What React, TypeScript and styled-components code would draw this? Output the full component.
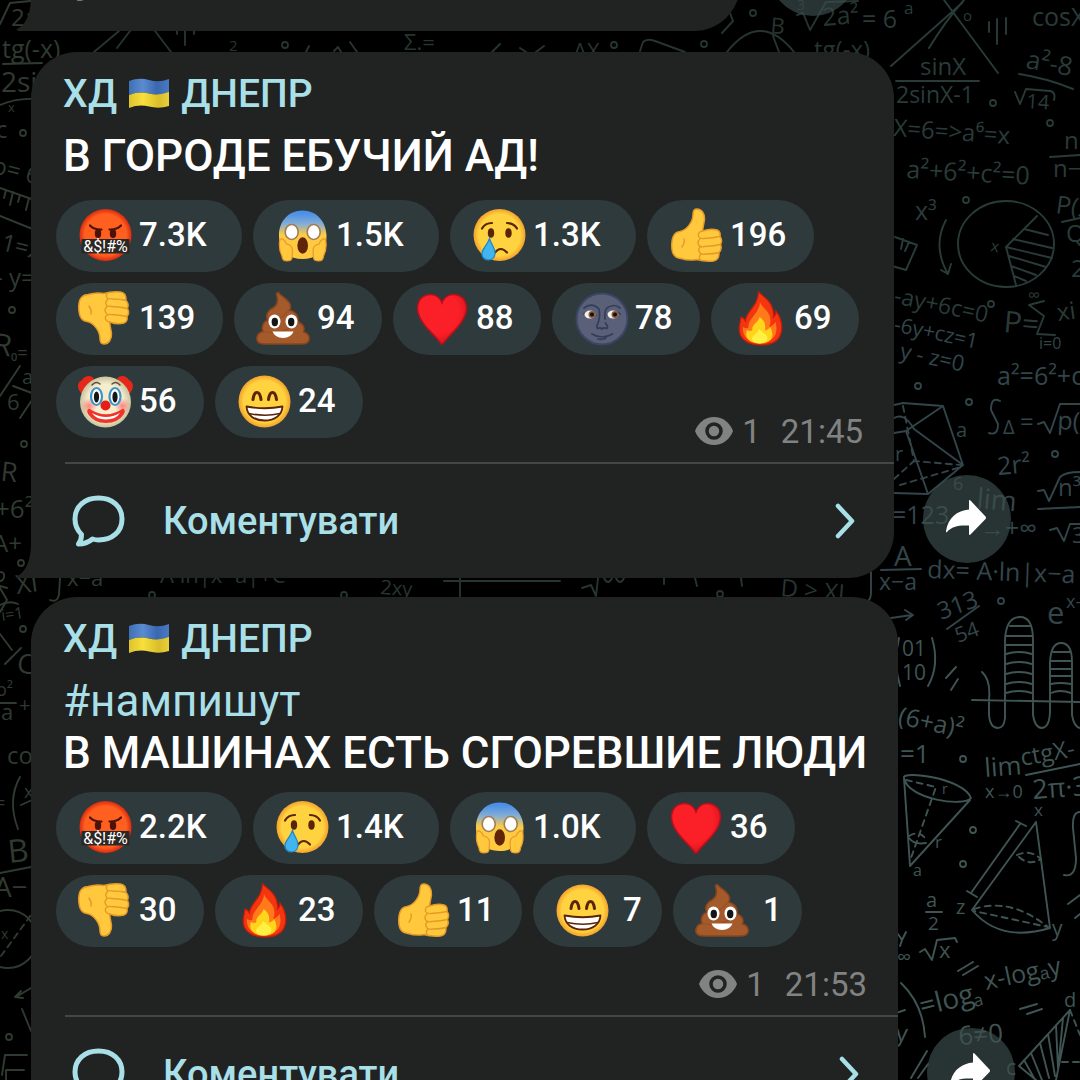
import React from "react";
import styled, { createGlobalStyle } from "styled-components";

const GlobalStyle = createGlobalStyle`
  * { box-sizing: border-box; }
  body { margin: 0; background: #000; font-family: Roboto, "Noto Sans", sans-serif; }
`;

const accent = "#a9dfe7";

const Page = styled.main`
  position: relative;
  height: 100vh;
  overflow: hidden;
  background: #000;
`;

const WallpaperSvg = styled.svg`
  position: absolute;
  top: 0;
  left: 0;
  width: 1080px;
  height: 1080px;
  font-family: "Open Sans", sans-serif;
  font-weight: 400;
`;

const Feed = styled.div`
  position: relative;
  display: flex;
  flex-direction: column;
  margin-top: -83px;
`;

const Row = styled.article<{ $gap: number }>`
  display: flex;
  align-items: flex-end;
  gap: 29px;
  padding-left: 31px;
  margin-bottom: ${(p) => p.$gap}px;
`;

const Bubble = styled.div<{ $width: number }>`
  position: relative;
  flex: 0 1 ${(p) => p.$width}px;
  min-width: 0;
  background: #212322;
  border-radius: 46px 46px 46px 0;
`;

const Tail = styled.svg`
  position: absolute;
  left: -15px;
  bottom: 0;
  width: 16px;
  height: 34px;
  fill: #212322;
`;

const Header = styled.h2`
  display: flex;
  align-items: center;
  gap: 11px;
  margin: 0;
  padding: 19px 31px 0 32px;
  font-size: 39px;
  line-height: 46px;
  font-weight: 500;
  color: ${accent};
`;

const FlagSvg = styled.svg`
  width: 42px;
  height: 32px;
`;

const Body = styled.div<{ $below: number }>`
  padding: 13px 0 ${(p) => p.$below}px 32px;
  font-size: 44px;
  line-height: 52px;
  font-weight: 500;
  color: #fff;
`;

const Paragraph = styled.p`
  margin: 0;
`;

const Hashtag = styled.a`
  color: ${accent};
  font-weight: 400;
  text-decoration: none;
`;

const Reactions = styled.div`
  display: flex;
  flex-wrap: wrap;
  gap: 11px;
  padding: 0 31px 24px 25px;
`;

const Pill = styled.button`
  display: flex;
  align-items: center;
  gap: 7px;
  height: 72px;
  padding: 0 28px 2px 22px;
  border: 0;
  border-radius: 36px;
  background: #2f3a3d;
  color: #fff;
  font: 500 33px/40px Roboto, "Noto Sans", sans-serif;
`;

const PillIcon = styled.svg`
  flex: none;
  width: 54px;
  height: 54px;
  overflow: visible;
`;

/* each extra character widens the pill by one fixed step */
const countWidths = [0, 18, 37, 56, 75];

const Count = styled.span<{ $chars: number }>`
  flex: none;
  width: ${(p) => countWidths[p.$chars]}px;
  text-indent: ${(p) => (p.$chars === 1 ? 7 : 0)}px;
  text-align: left;
  white-space: nowrap;
`;

const Meta = styled.div`
  display: flex;
  align-items: flex-end;
  align-self: flex-end;
  height: 43px;
  margin: 0 0 -10px auto;
  font-size: 33px;
  line-height: 33px;
  color: #818383;
`;

const EyeSvg = styled.svg`
  width: 38px;
  height: 28px;
  margin: 0 9px 3px 0;
`;

const Time = styled.time`
  margin-left: 20px;
`;

const Comment = styled.button<{ $height: number }>`
  display: flex;
  align-items: center;
  width: calc(100% - 34px);
  height: ${(p) => p.$height}px;
  margin-left: 34px;
  padding: 0 39px 0 7px;
  border: 0;
  border-top: 2px solid #454746;
  background: none;
  color: ${accent};
  font: 500 38px/46px Roboto, "Noto Sans", sans-serif;
  text-align: left;
`;

const BubbleSvg = styled.svg`
  width: 54px;
  height: 54px;
`;

const CommentText = styled.span`
  flex: 1;
  padding-left: 37px;
`;

const ChevronSvg = styled.svg`
  width: 20px;
  height: 36px;
`;

const Forward = styled.button`
  flex: none;
  display: grid;
  place-items: center;
  width: 88px;
  height: 88px;
  margin-bottom: 15px;
  padding: 0;
  border: 0;
  border-radius: 50%;
  background: rgba(62, 78, 78, 0.65);
`;

const ForwardSvg = styled.svg`
  width: 42px;
  height: 38px;
  fill: #fff;
`;

/* ---------- wallpaper ---------- */

type TProps = { x: number; y: number; s?: number; r?: number; children: React.ReactNode };
const T = ({ x, y, s = 24, r = 0, children }: TProps) => (
  <text x={x} y={y} fontSize={s} transform={r ? `rotate(${r} ${x} ${y})` : undefined}>
    {children}
  </text>
);
const L = ({ d, dash }: { d: string; dash?: boolean }) => (
  <path d={d} fill="none" stroke="currentColor" strokeWidth="1.9" strokeLinecap="round" strokeLinejoin="round" strokeDasharray={dash ? "6 5" : undefined} />
);
const Dots = ({ at }: { at: [number, number][] }) => (
  <>
    {at.map(([x, y]) => (
      <circle key={`${x}-${y}`} cx={x} cy={y} r="3" fill="none" stroke="currentColor" strokeWidth="1.8" />
    ))}
  </>
);

const Wallpaper = () => (
  <WallpaperSvg viewBox="0 0 1080 1080" fill="currentColor" aria-hidden="true">
    <defs>
      <radialGradient id="yellow"><stop offset="0.8" stopColor="#ffd23f" /><stop offset="1" stopColor="#f3a12c" /></radialGradient>
      <radialGradient id="rage"><stop offset="0.8" stopColor="#ff5f1f" /><stop offset="1" stopColor="#d92a10" /></radialGradient>
      <linearGradient id="scream" x1="0" y1="0" x2="0" y2="1"><stop offset="0.05" stopColor="#4a8fe8" /><stop offset="0.28" stopColor="#85aed4" /><stop offset="0.5" stopColor="#fccb45" /><stop offset="1" stopColor="#ffc93c" /></linearGradient>
      <radialGradient id="heart" cx="0.4" cy="0.35" r="0.75"><stop offset="0.6" stopColor="#fb1f27" /><stop offset="1" stopColor="#c9101b" /></radialGradient>
      <radialGradient id="clown"><stop offset="0.7" stopColor="#f6edcf" /><stop offset="1" stopColor="#c9c39d" /></radialGradient>
      <radialGradient id="cheek"><stop offset="0" stopColor="#ff6b6b" stopOpacity="0.8" /><stop offset="1" stopColor="#ff6b6b" stopOpacity="0" /></radialGradient>
      <linearGradient id="flagBlue" x1="0" y1="0" x2="1" y2="0"><stop offset="0" stopColor="#3f6fb5" /><stop offset="0.35" stopColor="#5b8bd0" /><stop offset="0.7" stopColor="#3a68b0" /><stop offset="1" stopColor="#4a78c2" /></linearGradient>
      <linearGradient id="flagYellow" x1="0" y1="0" x2="1" y2="0"><stop offset="0" stopColor="#dcc22c" /><stop offset="0.35" stopColor="#f8e03c" /><stop offset="0.75" stopColor="#d9bd2a" /><stop offset="1" stopColor="#e8d03a" /></linearGradient>
    </defs>

    <g color="#2f3a30">
      <L d="M0 24 L10 3 L40 0" />
      <T x={11} y={26}>2a</T>
      <T x={2} y={58} s={25}>tg(-x)</T>
      <L d="M3 64 L42 63" />
      <T x={1} y={92} s={28}>2si</T>
      <L d="M0 105 Q16 98 34 99" />
      <T x={8} y={112} s={13}>x</T>
      <T x={-4} y={138}>c</T>
      <T x={-9} y={173} r={14}>o= 6</T>
      <L d="M0 188 L40 202 M6 190 L4 198 M13 192 L10 205 M20 195 L18 202 M29 198 L26 210 M0 216 L40 232" />
      <T x={0} y={250} r={14}>1=x</T>
      <T x={-5} y={286}>- y=</T>
      <T x={-8} y={354} s={30} r={8}>R</T>
      <T x={11} y={359} s={18}>₀=</T>
      <L d="M0 396 L20 366 M13 386 L40 396 M20 418 L40 388" />
      <T x={22} y={384} s={20}>a</T>
      <T x={7} y={410} s={22}>6</T>
      <T x={-6} y={480} s={27} r={6}>'R</T>
      <T x={-5} y={518} s={26}>+6²</T>
      <T x={-7} y={552} s={24}>A+</T>
      <L d="M0 572 Q5 572 4 577 Q3 581 0 581 M0 586 L7 588 M0 588 L7 600 L0 612" />
      <T x={17} y={594} s={26} r={-8}>XI</T>
      <L d="M60 578 L59 595 Q57 603 50 600 M0 605 Q10 600 18 604" />
      <T x={67} y={586} s={22}>x−a</T>
      <T x={2} y={621} s={16} r={-8}>i=1</T>
      <L d="M0 634 L12 650 M5 664 L21 648" />
      <T x={16} y={672} s={27} r={8}>C</T>
      <T x={-4} y={696} s={18}>o²</T>
      <L d="M0 703 H16" />
      <T x={1} y={720} s={22}>a</T>
      <T x={19} y={712} s={20}>+</T>
      <T x={7} y={764}>co</T>
      <T x={-6} y={810} s={20}>=</T>
      <L d="M20 777 Q7 800 18 829 M21 805 L32 800" />
      <T x={24} y={798} s={18}>x</T>
      <T x={9} y={863} s={32} r={-6}>B</T>
      <L d="M0 873 L31 867" />
      <T x={-6} y={897} s={28}>A−</T>
      <circle cx="8" cy="939" r="29" fill="none" stroke="currentColor" strokeWidth="1.9" />
      <T x={1} y={939} s={14}>x</T>
      <L d="M1 956 L31 915" dash />
      <L d="M31 988 L16 997 M21 991 L15 997 L23 998 M22 1009 L31 1031 M2 1075 L5 1055 H27 M6 1080 V1070 H24" />
      <Dots at={[[23, 133], [12, 310], [24, 444], [21, 563], [23, 629], [9, 1037]]} />
    </g>

    <g color="#263531">
      <L d="M94 52 L119 31 M117 48 L130 31 M155 31 L171 52 M185 31 V45 M177 31 V34 M194 31 V34" />
      <T x={229} y={51} s={15}>2</T>
      <L d="M309 46 L306 52 M334 51 L338 47 L341 52 M350 42 L357 52" />
      <T x={404} y={50} s={22}>Σ.=</T>
      <L d="M492 52 L500 44 M520 48 L526 52 M536 52 L544 46" />
      <T x={573} y={59} s={22}>AX</T>
      <L d="M640 51 L643 42 Q647 38 655 41 L685 52 M727 52 Q760 10 794 52 M773 36 L779 52 M722 33 L733 21 L730 13" />
      <T x={770} y={33} s={22} r={5}>B</T>
      <T x={814} y={58} s={24}>tg(-x)</T>
      <L d="M797 15 L803 13 L810 30 L826 2 L858 1" />
      <T x={797} y={10} s={14}>3</T>
      <T x={823} y={26} s={25} r={-5}>2a²</T>
      <Dots at={[[285, 45], [614, 45], [704, 44], [753, 13]]} />
      <T x={160} y={583} s={22}>A·ln|x−a|+C</T>
      <T x={380} y={594} s={20} r={4}>2xy</T>
      <L d="M444 581 H560 M460 578 V597 M582 588 L591 585 L596 596 L598 578 M604 578 Q608 586 612 578 M616 578 Q620 586 624 578" />
      <L d="M664 578 V584 M695 578 L697 586 M741 578 L742 586" />
      <T x={780} y={596} r={5}>D &gt; XI</T>
      <Dots at={[[152, 595], [344, 595], [720, 594]]} />
    </g>

    <g color="#293b39">
      <T x={862} y={28} s={25}>= 6</T>
      <T x={904} y={14} s={17}>a</T>
      <L d="M891 66 L962 3 M944 0 L998 73 M964 0 Q946 20 929 48 M989 22 V32 M997 19 V44 M1006 18 V34" />
      <T x={963} y={21} s={15}>o</T>
      <T x={1032} y={26} s={25}>cosX</T>
      <T x={920} y={75} s={24}>sinX</T>
      <L d="M896 81 H979" />
      <T x={896} y={103} s={23}>2sinX-1</T>
      <T x={1025} y={68} s={26} r={10}>a²-8</T>
      <L d="M1019 74 Q1046 78 1073 89 M1015 92 L1020 104 L1026 89 L1050 91 Q1056 92 1054 100" />
      <T x={1026} y={108} s={20} r={4}>14</T>
      <T x={893} y={136} s={24} r={4}>X=6=&gt;a⁶=x</T>
      <T x={906} y={178} s={25} r={3}>a²+6²+c²=0</T>
      <T x={1064} y={149}>n</T>
      <L d="M1050 157 L1080 155" />
      <T x={1053} y={177}>n−</T>
      <T x={915} y={220} s={25}>x³</T>
      <ellipse cx="1006" cy="244" rx="48" ry="43" fill="none" stroke="currentColor" strokeWidth="1.9" />
      <L d="M1006 247 L1037 216 M1006 247 L1016 285 M1024 229 L1048 235 M1013 239 L1052 248 M1006 247 L1052 258 M1009 256 L1046 267 M1011 266 L1036 275 M1014 276 L1026 281" />
      <T x={990} y={251} s={16} r={10}>x</T>
      <L d="M946 220 Q932 246 948 274 M941 270 L948 274 L951 264 M895 237 L917 245 L906 270 L892 266 M903 239 L901 249 M909 242 L905 251" />
      <T x={1055} y={213} s={25} r={8}>P(x)</T>
      <L d="M1062 222 L1080 218" />
      <T x={1066} y={242}>Q</T>
      <T x={1071} y={277}>2</T>
      <T x={893} y={303} s={23} r={12}>-ay+6c=0</T>
      <T x={1003} y={332} s={30} r={5}>P=</T>
      <L d="M1044 301 L1029 305 L1044 316 L1037 334 L1055 335" />
      <T x={1028} y={301} s={17}>∞</T>
      <T x={1058} y={321} r={-8}>xi</T>
      <Dots at={[[993, 103], [1050, 123], [966, 200], [991, 304]]} />
    </g>

    <g color="#32454a">
      <T x={893} y={331} s={21} r={12}>-6y+cz=1</T>
      <T x={899} y={358} s={22} r={12}>y - z=0</T>
      <T x={1039} y={349} s={16}>i=0</T>
      <T x={997} y={385} s={25}>a²=6²+c</T>
      <L d="M894 405 L903 403 L943 406 L963 465 L928 494 L894 493 M906 431 L943 406 M894 433 L906 431 L928 494 M894 418 Q904 412 914 429 L963 465" />
      <L d="M903 406 L914 461 L961 465 M894 479 L914 461 M900 485 L961 467" dash />
      <T x={956} y={437} s={20}>a</T>
      <T x={895} y={461} s={20}>r</T>
      <L d="M1000 401 Q991 396 991 410 L998 424 Q998 436 989 433 M1038 424 L1044 422 L1050 433 L1060 404 H1080" />
      <T x={1003} y={434} s={20}>Δ</T>
      <T x={1020} y={430} s={24}>=</T>
      <T x={1057} y={429} s={25} r={3}>p(</T>
      <T x={998} y={475} s={25} r={-5}>2r²</T>
      <L d="M1038 491 L1044 490 L1049 501 L1060 477 Q1065 472 1080 472 M1038 509 L1080 507 M1050 530 L1057 528 L1064 541 L1070 524 H1080" />
      <T x={1058} y={496} s={24}>n³</T>
      <T x={1072} y={543} s={22}>3</T>
      <T x={892} y={524} s={25}>=123</T>
      <T x={953} y={490} s={18}>6</T>
      <T x={976} y={508} s={28} r={5}>lim</T>
      <T x={980} y={537} s={25}>→+∞</T>
      <T x={894} y={566} s={28}>A</T>
      <L d="M881 570 L921 569" />
      <T x={879} y={590} s={23}>x−a</T>
      <T x={927} y={578} s={25} r={2}>dx= A·ln|x−a|+</T>
      <T x={941} y={620} s={24} r={-20}>313</T>
      <L d="M947 629 L979 606" />
      <T x={958} y={643} s={21} r={-20}>54</T>
      <L d="M891 618 L912 615 M905 610 L913 615 L906 620 M871 572 V592 Q871 599 868 601" />
      <T x={1047} y={624} s={31}>e</T>
      <T x={1066} y={608} s={18}>x-</T>
      <Dots at={[[918, 386], [969, 402], [1055, 454], [1001, 601]]} />
    </g>

    <g color="#3f5554">
      <T x={902} y={656} s={21}>01</T>
      <T x={902} y={680} s={21}>10</T>
      <L d="M932 638 Q940 665 928 686 M899 638 Q893 662 900 686 M946 678 L956 667 M951 690 L958 679" />
      <L d="M972 700 L1080 702 M982 672 Q991 680 989 700 V715 Q990 728 998 728 Q1004 728 1005 718 V640 Q1006 617 1020 617 Q1033 617 1033 640 V715 Q1035 728 1042 728 Q1050 727 1050 710 V662 Q1051 643 1061 643 Q1072 643 1072 662 V715 Q1074 727 1080 728" />
      <L d="M1010 626 H1030 M1006 636 H1032 M1006 645 H1032 M1006 654 Q1020 650 1032 654 M1006 664 Q1020 660 1032 664 M1006 674 Q1020 670 1032 674 M1006 684 Q1020 680 1032 684 M1006 693 Q1020 689 1032 693 M1053 652 H1070 M1051 661 H1071 M1051 669 H1071 M1051 676 H1071 M1051 684 Q1060 682 1071 684 M1051 693 Q1060 689 1071 693" />
      <T x={897} y={724} s={25} r={12}>(6+a)²</T>
      <T x={900} y={763} s={26}>=1</T>
      <T x={985} y={777} s={26} r={-4}>lim</T>
      <T x={985} y={798} s={18}>x→0</T>
      <T x={1022} y={766} s={24} r={-10}>ctgX-</T>
      <L d="M1026 775 L1080 764" />
      <T x={1033} y={799} s={27} r={-4}>2π·3</T>
      <L d="M904 778 C901 770 964 778 971 798 C965 807 908 800 904 778 L910 866 L970 800 M909 838 Q914 845 926 843" />
      <L d="M906 780 L936 787 L911 858 M909 836 Q920 829 927 841" dash />
      <T x={942} y={794} s={14}>r</T>
      <T x={935} y={848} s={17}>r</T>
      <T x={913} y={876} s={16}>a</T>
      <L d="M1036 822 L972 910 Q1000 943 1050 928 L1036 822 M1020 824 L971 893 M1016 821 L1026 826 M967 891 L977 897" />
      <L d="M974 909 Q1010 897 1048 927 L974 911 M1017 855 Q1030 849 1041 859 Q1028 867 1017 855" dash />
      <T x={1034} y={816} s={17}>x</T>
      <T x={956} y={914} s={20}>z</T>
      <T x={1052} y={936} s={21}>y</T>
      <L d="M1080 812 Q1072 812 1073 828 L1076 858 Q1076 878 1064 875 M1068 904 L1080 895 M1075 918 L1080 914" />
      <T x={926} y={907} s={20}>a</T>
      <L d="M926 912 H942" />
      <T x={928} y={930} s={19}>2</T>
      <L d="M898 934 L902 940 L906 932 M902 940 L900 946" />
      <T x={897} y={964} s={20}>∞</T>
      <L d="M920 952 L925 949 L932 960 L937 940 L955 938 L957 942" />
      <T x={939} y={958} s={22}>x</T>
      <L d="M958 971 L973 962 M963 975 L978 966 M1020 1009 L1037 1004 M1027 1014 L1042 1009 M901 983 Q923 1004 925 1037 M896 1013 L905 1010" />
      <T x={922} y={1016} s={28} r={-14}>=log</T>
      <T x={975} y={1007} s={17} r={-14}>a</T>
      <T x={986} y={990} s={25} r={-12}>x-logₐy</T>
      <T x={895} y={1041} s={24} r={5}>y</T>
      <T x={959} y={1045} s={26} r={-4}>6≠0</T>
      <T x={1064} y={1007} s={20}>d</T>
      <T x={1006} y={1075} s={21}>c</T>
      <L d="M1019 1066 L1070 1010 L1056 1080 M1019 1066 L1036 1080 M1063 1018 L1059 1060 M1056 1025 L1058 1068 M1048 1034 L1055 1076 M1040 1043 L1049 1078 M1031 1053 L1042 1080 M1024 1060 L1034 1078 M911 1078 L927 1051 M918 1078 L928 1064" />
      <L d="M1070 1010 L1080 1035 M1062 1062 H1080" dash />
      <Dots at={[[963, 759], [973, 830], [963, 864]]} />
    </g>
  </WallpaperSvg>
);

/* ---------- emoji drawings, on a 54 unit grid ---------- */

const brown = "#5b2406";

const Hand = () => (
  <g stroke="#e59a28" strokeWidth="1.4" strokeLinecap="round">
    <path fill="#ffc83d" d="M28 1C33 1 36 6 35.500 12L33.500 23Q42 20 48 22Q52 23.500 51 28.500Q54 32 51.500 36.500Q53.500 41 50 44.500Q50.500 52 44.500 53Q36 54 28 51.500Q20 53 12 50.500C5 50 2.700 45 2.700 38C2.700 30 5 24 11 23.500C18 22 24 14 24 6Q24 1 28 1Z" />
    <path fill="none" d="M33.500 23Q28.500 24 29.500 28.500Q31 31 35 30.500Q44 30 51 28.500M31 31Q27.500 34 30 37.500Q32 39.500 36 38.500Q45 38 51.500 36.500M31 39Q28.500 42 31 45Q33 47 37 46Q45 46 50 44.500M31.500 46.500Q29 50 32 52.500M13 39Q16 35 15 31" />
  </g>
);

const emoji: Record<string, React.ReactNode> = {
  rage: (
    <>
      <circle cx="27.500" cy="27" r="26" fill="url(#rage)" />
      <path d="M12 17.500Q16.500 22 23.500 21.500M43 17.500Q38.500 22 31.500 21.500" fill="none" stroke="#4a1208" strokeWidth="2.200" strokeLinecap="round" />
      <ellipse cx="20" cy="25.500" rx="3.200" ry="4.500" fill="#4a1208" />
      <ellipse cx="35" cy="25.500" rx="3.200" ry="4.500" fill="#4a1208" />
      <rect x="3.500" y="31" width="48" height="14.500" rx="1" fill="#2b2724" />
      <text x="27.500" y="43.500" textAnchor="middle" fontSize="16" fontWeight="400" fill="#fff">&amp;$!#%</text>
    </>
  ),
  scream: (
    <>
      <path d="M27.500 2.500C42 2.500 51 14 51.500 27C52 42 42 51 27.500 51C13 51 3.500 42 4 27C4 14 13 2.500 27.500 2.500Z" fill="url(#scream)" />
      <g fill="#fff" stroke="#a47c50" strokeWidth="1.600">
        <ellipse cx="16.700" cy="24" rx="6.500" ry="7.500" />
        <ellipse cx="38.700" cy="24" rx="6.500" ry="7.500" />
      </g>
      <ellipse cx="27.700" cy="37.500" rx="5.300" ry="8.200" fill="#5f2409" />
      <g fill="#ffc83d" stroke="#e9992b" strokeWidth="1.200">
        <path d="M5 31Q9 30 11.500 36Q17 37 17.500 42L17 50Q16.500 53 12 53Q7 53 7 48Q3 40 5 31Z" />
        <path d="M50.500 31Q46.500 30 44 36Q38.500 37 38 42L38.500 50Q39 53 43.500 53Q48.500 53 48.500 48Q52.500 40 50.500 31Z" />
      </g>
    </>
  ),
  cry: (
    <>
      <circle cx="27.500" cy="27" r="26" fill="url(#yellow)" />
      <ellipse cx="19" cy="25" rx="3.200" ry="4.800" fill={brown} />
      <ellipse cx="36.500" cy="25" rx="3.200" ry="4.800" fill={brown} />
      <path d="M10 20.500Q13 15 20 15M45 20.500Q42 15 35 15M23 44.500Q28.500 37.500 35 44.500" fill="none" stroke={brown} strokeWidth="2.200" strokeLinecap="round" />
      <path d="M17.500 30.500C19 36 23 40 23 45C23 49.500 20 52 16.500 52C12.500 52 9.500 49 10 45C10.500 40 15.500 37 17.500 30.500Z" fill="#42b4f0" stroke="#1c86c7" strokeWidth="1.200" />
    </>
  ),
  up: <Hand />,
  down: <g transform="matrix(1 0 0 -1 -2 54)"><Hand /></g>,
  poop: (
    <>
      <path d="M22.500 1.500C25 6 35 9 34.500 16Q34.500 18 33.500 19C41 21 43 27 42 31C48 33 49 38 47.500 41C52 42 54 46 53 49Q52 53 45 53H9Q2 53 1 49C0 45 3 41 7 40.500C5 35 8 30 12 29.500C9 24 12 19 17 17C23 14 22 8 20.500 2.500Z" fill="#a55a2b" stroke="#8a451d" strokeWidth="1.500" strokeLinejoin="round" />
      <path d="M12 29.500Q24 31 33 19M7 40.500Q28 45 42 31" fill="none" stroke="#8a451d" strokeWidth="1.200" opacity=".5" />
      <ellipse cx="18.500" cy="30.500" rx="6" ry="7" fill="#fff" />
      <ellipse cx="35.500" cy="30.500" rx="6" ry="7" fill="#fff" />
      <ellipse cx="18.800" cy="31" rx="3.200" ry="4.200" fill="#151515" />
      <ellipse cx="35.200" cy="31" rx="3.200" ry="4.200" fill="#151515" />
      <path d="M16.500 40.500H37.500Q35 47 27 47Q19 47 16.500 40.500Z" fill="#fff" />
    </>
  ),
  heart: (
    <path d="M27 12C30.500 3 38.500 2.500 43.500 4.500C50.500 7 53 15 50.500 23C46.500 36 35.500 42 28.500 52Q27 54 25.500 52C18.500 42 7.500 36 3.500 23C1 15 3.500 7 10.500 4.500C15.500 2.500 23.500 3 27 12Z" fill="url(#heart)" stroke="#b90f1a" strokeWidth="1.500" />
  ),
  moon: (
    <>
      <circle cx="28" cy="28" r="25.500" fill="#596078" stroke="#3b4666" strokeWidth="2" />
      <g fill="none" stroke="#333d59" strokeWidth="1.700" strokeLinecap="round">
        <path d="M10 17Q18 11 25 18Q26.500 26 24 32Q22 36 23.500 37.500Q27 36 28 38Q30 36 33 37.500Q34.500 36 31.500 32M31 28Q30 20 33 17Q40 12 46 17M18 43Q28 49 38.500 43M24 48Q28 49 32 47" />
        <path d="M10 23Q16 18 22 24M33 24Q39 18 46 23" />
      </g>
      <ellipse cx="16" cy="23.500" rx="5.500" ry="4" fill="#f4f1ea" />
      <ellipse cx="39" cy="23.500" rx="5.500" ry="4" fill="#f4f1ea" />
      <circle cx="18" cy="23.500" r="3.500" fill="#8a5a35" /><circle cx="18" cy="23.500" r="2" fill="#111" />
      <circle cx="41" cy="23.500" r="3.500" fill="#8a5a35" /><circle cx="41" cy="23.500" r="2" fill="#111" />
    </>
  ),
  fire: (
    <>
      <path d="M25.500 1C31 6 38 10 40 19Q41 23 40.500 26Q43 24 43 20C48 26 50 35 48 42C46 50 38 54 27.500 54C16 54 8 49 6.500 41C5.500 34 8 30 8 26Q11 27 12.500 30C13 20 25 16 25.500 1Z" fill="#f4350f" stroke="#c51d08" strokeWidth="1.200" />
      <path d="M27 11C29 17 37 20 37.500 29Q37.500 33 36 36Q41 34 42.500 31C46 43 40 52 27.500 52C16 52 9 46 10 36Q13 38 15.500 37C14 28 27 22 27 11Z" fill="#ff7b1a" />
      <path d="M26.500 26C31 29 33 33 32 39Q35 40 37 36C43 46 37 52.500 27 52.500C17 52.500 11 47 14 39Q17 41 19.500 39C18 34 26 31 26.500 26Z" fill="#ffd51c" />
      <path d="M26 38C31 43 36 44 34 49Q32 52.500 27 52.500Q20 52.500 19 48C19 44 25 43 26 38Z" fill="#fff044" />
    </>
  ),
  clown: (
    <>
      <path d="M3 19C-2 13 0 8 4 6C7 1 14 1 16 5L9 18ZM52 19C57 13 55 8 51 6C48 1 41 1 39 5L46 18Z" fill="#e8271c" />
      <circle cx="27.500" cy="28" r="25.500" fill="url(#clown)" />
      <circle cx="11" cy="32" r="8" fill="url(#cheek)" /><circle cx="44.500" cy="32" r="8" fill="url(#cheek)" />
      <g fill="#fff" stroke="#3e94c8" strokeWidth="2.200">
        <ellipse cx="18.500" cy="22.500" rx="5.500" ry="8.500" /><ellipse cx="37" cy="22.500" rx="5.500" ry="8.500" />
      </g>
      <ellipse cx="18.500" cy="23" rx="2.600" ry="5.500" fill="#161616" /><ellipse cx="37" cy="23" rx="2.600" ry="5.500" fill="#161616" />
      <path d="M14 11Q18 6.500 22 10M34 10Q38 6.500 42 11" fill="none" stroke="#5b4a32" strokeWidth="1.500" strokeLinecap="round" />
      <path d="M11 34.500Q28 46 45 34.500Q48 36 46 40Q40 49 28 49Q16 49 10 40Q8 36 11 34.500Z" fill="#f0342a" />
      <path d="M14 39Q28 47 42 39Q38 45.500 28 45.500Q18 45.500 14 39Z" fill="#fff" />
      <circle cx="27.500" cy="31.500" r="5" fill="#e51f18" />
    </>
  ),
  grin: (
    <>
      <circle cx="27.500" cy="27.500" r="26" fill="url(#yellow)" />
      <path d="M16 25.500Q17 18.500 20 18.500Q23 18.500 24 25.500M31.500 25.500Q32.500 18.500 35.500 18.500Q38.500 18.500 39.500 25.500" fill="none" stroke={brown} strokeWidth="3" strokeLinecap="round" />
      <path d="M9.500 32.500Q28 36 45.500 32.500C45 41 38 46.500 27.500 46.500C17 46.500 10 41 9.500 32.500Z" fill="#fff" stroke={brown} strokeWidth="1.800" strokeLinejoin="round" />
      <path d="M12 39.500Q28 43 43 39.500" fill="none" stroke={brown} strokeWidth="1.600" />
    </>
  ),
};

type Reaction = { kind: string; count: string; label: string };

const Flag = () => (
  <FlagSvg viewBox="0 0 42 32" role="img" aria-label="Україна">
    <path d="M1 3Q11 -1 21 2T41 1V15Q31 18 21 15.500T1 17Z" fill="url(#flagBlue)" />
    <path d="M1 17Q11 13 21 15.500T41 14V28Q31 31 21 28.500T1 30Z" fill="url(#flagYellow)" />
  </FlagSvg>
);

const CommentRow = ({ height = 116 }: { height?: number }) => (
  <Comment type="button" $height={height}>
    <BubbleSvg viewBox="0 0 54 54" fill="none" stroke="currentColor" strokeWidth="5" strokeLinejoin="round" aria-hidden="true">
      <path d="M26.500 4C40.500 4 50 12.500 50 25C50 37.500 40.500 46 26.500 46Q23.500 46 20.500 45Q14.500 50 6.500 50Q9.500 46.500 9.500 40.500Q3 34 3 25C3 12.500 12.500 4 26.500 4Z" />
    </BubbleSvg>
    <CommentText>Коментувати</CommentText>
    <ChevronSvg viewBox="0 0 20 36" fill="none" stroke="currentColor" strokeWidth="4.500" strokeLinecap="round" strokeLinejoin="round" aria-hidden="true">
      <path d="M3 3L17 18L3 33" />
    </ChevronSvg>
  </Comment>
);

const BubbleTail = () => (
  <Tail viewBox="0 0 16 34" aria-hidden="true">
    <path d="M15 0C15 17 9 29 1 32Q0 34 3 34H16V0Z" />
  </Tail>
);

const ForwardButton = () => (
  <Forward type="button" aria-label="Переслати">
    <ForwardSvg viewBox="0 0 42 38" aria-hidden="true">
      <path d="M23 1Q23 -0.500 24.500 0.500L39.500 16.500Q40.500 17.700 39.500 19L24.500 34.500Q23 35.500 23 34V25.500C13 25 6 26 1 32Q-0.200 33 0 31C2 18 11 10.500 23 9.500Z" />
    </ForwardSvg>
  </Forward>
);

type PostProps = { width: number; below: number; reactions: Reaction[]; time: string; children: React.ReactNode };

const Post = ({ width, below, reactions, time, children }: PostProps) => (
  <Row $gap={19}>
    <Bubble $width={width}>
      <Header><span>ХД</span><Flag /><span>ДНЕПР</span></Header>
      <Body $below={below}>{children}</Body>
      <Reactions>
        {reactions.map((r) => (
          <Pill type="button" key={r.kind} aria-label={`${r.label} ${r.count}`}>
            <PillIcon viewBox="0 0 54 54" aria-hidden="true">{emoji[r.kind]}</PillIcon>
            <Count $chars={r.count.length}>{r.count}</Count>
          </Pill>
        ))}
        <Meta>
          <EyeSvg viewBox="0 0 38 28" aria-hidden="true">
            <path d="M19 0C28 0 35 6 38 14C35 22 28 28 19 28C10 28 3 22 0 14C3 6 10 0 19 0Z" fill="#818383" />
            <circle cx="19" cy="14" r="7" fill="#818383" stroke="#212322" strokeWidth="3.500" />
          </EyeSvg>
          <span>1</span>
          <Time>{time}</Time>
        </Meta>
      </Reactions>
      <CommentRow />
      <BubbleTail />
    </Bubble>
    <ForwardButton />
  </Row>
);

const first: Reaction[] = [
  { kind: "rage", count: "7.3K", label: "Лють" },
  { kind: "scream", count: "1.5K", label: "Жах" },
  { kind: "cry", count: "1.3K", label: "Сум" },
  { kind: "up", count: "196", label: "Подобається" },
  { kind: "down", count: "139", label: "Не подобається" },
  { kind: "poop", count: "94", label: "Купка" },
  { kind: "heart", count: "88", label: "Серце" },
  { kind: "moon", count: "78", label: "Місяць" },
  { kind: "fire", count: "69", label: "Вогонь" },
  { kind: "clown", count: "56", label: "Клоун" },
  { kind: "grin", count: "24", label: "Усмішка" },
];

const second: Reaction[] = [
  { kind: "rage", count: "2.2K", label: "Лють" },
  { kind: "cry", count: "1.4K", label: "Сум" },
  { kind: "scream", count: "1.0K", label: "Жах" },
  { kind: "heart", count: "36", label: "Серце" },
  { kind: "down", count: "30", label: "Не подобається" },
  { kind: "fire", count: "23", label: "Вогонь" },
  { kind: "up", count: "11", label: "Подобається" },
  { kind: "grin", count: "7", label: "Усмішка" },
  { kind: "poop", count: "1", label: "Купка" },
];

export default function App() {
  return (
    <>
      <GlobalStyle />
      <Page>
        <Wallpaper />
        <Feed>
          <Row $gap={21}>
            <Bubble $width={709}>
              <CommentRow height={114} />
              <BubbleTail />
            </Bubble>
            <ForwardButton />
          </Row>
          <Post width={863} below={18} reactions={first} time="21:45">
            <Paragraph>В ГОРОДЕ ЕБУЧИЙ АД!</Paragraph>
          </Post>
          <Post width={867} below={13} reactions={second} time="21:53">
            <Paragraph><Hashtag href="#нампишут">#нампишут</Hashtag></Paragraph>
            <Paragraph>В МАШИНАХ ЕСТЬ СГОРЕВШИЕ ЛЮДИ</Paragraph>
          </Post>
        </Feed>
      </Page>
    </>
  );
}
